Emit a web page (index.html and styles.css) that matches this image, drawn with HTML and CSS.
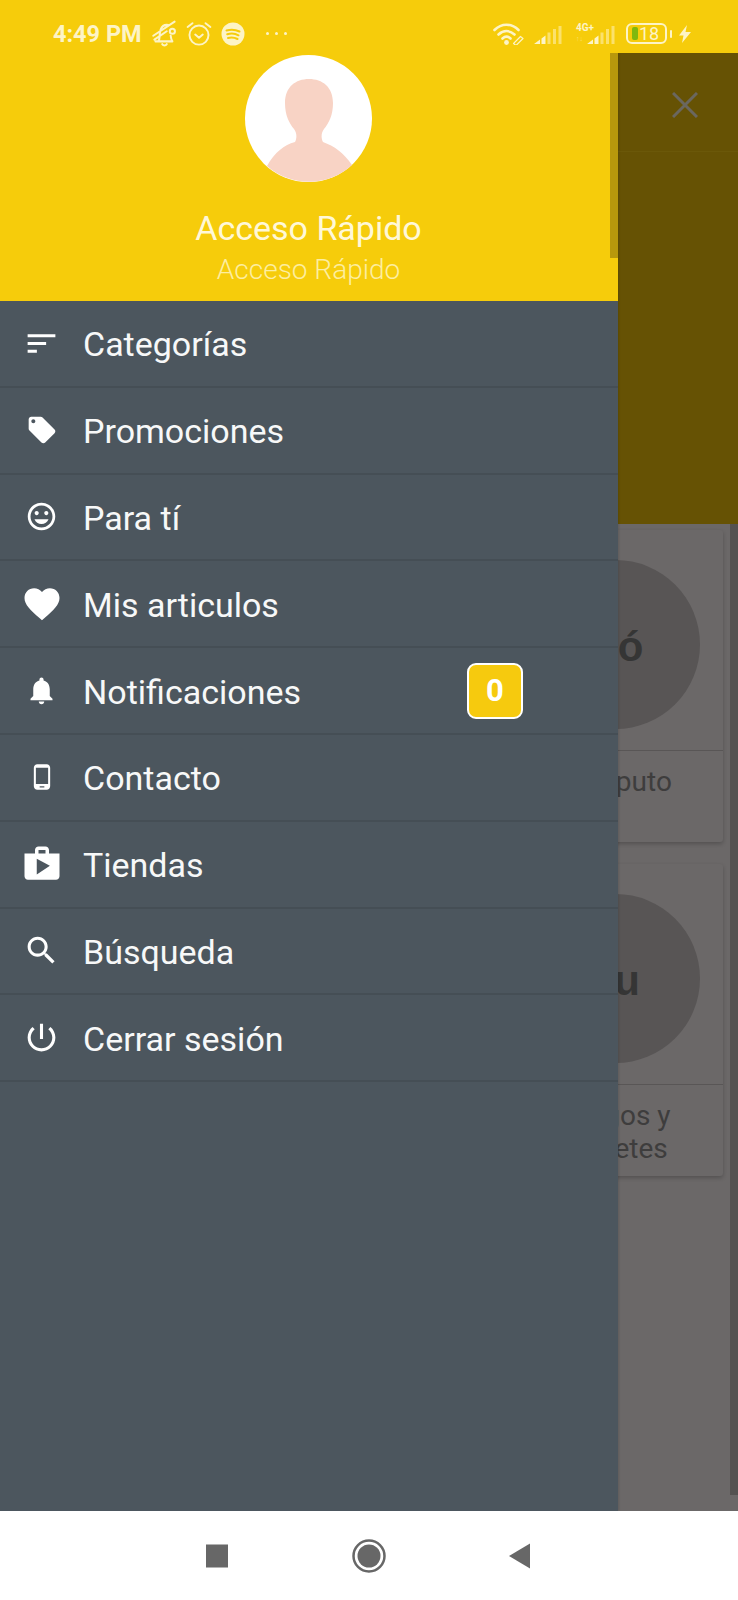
FILE: index.html
```html
<!DOCTYPE html>
<html lang="es">
<head>
<meta charset="utf-8">
<title>Acceso Rápido</title>
<link rel="stylesheet" href="styles.css">
</head>
<body>
<div class="screen">
  <div class="status">
    <span class="time">4:49 PM</span>
    <svg class="st st-bell" viewBox="0 0 24 24"><path d="M4 19h15M6.500 19c1.500-2 1-5 1.500-8M8.500 8.500C10 5 13 4 15.500 4.500M17.500 14c.2 2 .6 3.500 1.500 5M10 21.500c1 1.500 3 1.500 4 0M2 14L21 1.500M3 17.500L14 10"/><circle cx="19" cy="10" r="2.300"/></svg>
    <svg class="st st-alarm" viewBox="0 0 24 24"><circle cx="12" cy="13" r="8.800"/><path d="M8.500 12.500l3.500 3 3.500-3M1.500 5.500L6 2M22.500 5.500L18 2"/></svg>
    <svg class="st st-spotify" viewBox="0 0 24 24"><circle class="solid" cx="12" cy="12" r="11.500"/><path class="cut" d="M5.500 8.500c4-1.200 9-1 13 1M6.200 12.300c3.500-1 8-.8 11.300 1M7 16c3-.8 6.500-.6 9.500 1"/></svg>
    <span class="dots"><i></i><i></i><i></i></span>
    <span class="status-right">
      <svg class="st st-wifi" viewBox="0 0 31 23"><path d="M1.500 8C8.500 1 18.500 1 25.500 8M5.500 12.500c5-4.500 11-4.500 16 0M9.500 16.500c2.500-2.300 5.500-2.300 8 0"/><circle class="solid" cx="13.500" cy="20.500" r="2.400"/><path class="thin" d="M20.500 21.500l7-7 2.500 2-7 7z"/></svg>
      <svg class="st st-signal" viewBox="0 0 28 18"><path class="solid" d="M0 18l6-4.500V18zM7.500 12.500l4-3V18h-4z"/><rect class="faint" x="13.500" y="6.500" width="3" height="11.500"/><rect class="faint" x="19" y="3" width="3" height="15"/><rect class="faint" x="24.500" y="0" width="3" height="18"/></svg>
      <span class="net"><span class="net-label">4G+</span><span class="net-arrows">↑↓</span></span>
      <svg class="st st-signal st-signal2" viewBox="0 0 28 18"><path class="solid" d="M0 18l6-4.500V18zM7.500 12.500l4-3V18h-4z"/><rect class="faint" x="13.500" y="6.500" width="3" height="11.500"/><rect class="faint" x="19" y="3" width="3" height="15"/><rect class="faint" x="24.500" y="0" width="3" height="18"/></svg>
      <span class="battery"><i class="battery-fill"></i><span class="battery-num">18</span></span>
      <i class="battery-nub"></i>
      <svg class="st st-bolt" viewBox="0 0 12 18"><path class="solid" d="M8 0L0 10.500h4.500L3 18l9-11H6.500z"/></svg>
    </span>
  </div>

  <div class="main">
    <div class="behind">
      <div class="band">
        <div class="band-head">
          <svg class="close" viewBox="0 0 26 26"><path d="M1 1l24 24M25 1L1 25"/></svg>
        </div>
      </div>
      <div class="content">
        <div class="cards">
          <article class="card">
            <div class="card-top"><div class="disc">Có</div></div>
            <div class="card-text">Cómputo</div>
          </article>
          <article class="card">
            <div class="card-top"><div class="disc">Ju</div></div>
            <div class="card-text">Juegos y<br>juguetes</div>
          </article>
        </div>
        <div class="page-scroll"></div>
      </div>
    </div>

    <aside class="drawer">
      <header class="drawer-head">
        <svg class="avatar" viewBox="0 0 127 127">
          <circle class="avatar-bg" cx="63.500" cy="63.500" r="63.500"/>
          <path class="avatar-fg" d="M64 24c-13.500 0-24 8-24 24 0 12 4 20 9 26 3 4 3 9 1 13C39 90 30 97 22 111A63.500 63.500 0 0 0 107 110C99 98 89 91 78 87c-2-4-2-9 1-13 5-6 9-14 9-26 0-16-10.500-24-24-24z"/>
        </svg>
        <div class="head-title">Acceso Rápido</div>
        <div class="head-sub">Acceso Rápido</div>
        <div class="drawer-scroll"></div>
      </header>
      <nav class="menu">
        <a class="row"><span class="ic"><svg class="i37" viewBox="0 0 24 24"><path d="M3 18h6v-2H3v2zM3 6v2h18V6H3zm0 7h12v-2H3v2z"/></svg></span><span class="label">Categorías</span></a>
        <a class="row"><span class="ic"><svg class="i32" viewBox="0 0 24 24"><path d="M21.410 11.580l-9-9C12.050 2.220 11.550 2 11 2H4c-1.100 0-2 .9-2 2v7c0 .55.22 1.050.59 1.420l9 9c.36.36.86.58 1.410.58.55 0 1.050-.22 1.410-.59l7-7c.37-.36.59-.86.59-1.410 0-.55-.23-1.060-.59-1.420zM5.500 7C4.670 7 4 6.330 4 5.500S4.670 4 5.500 4 7 4.670 7 5.500 6.330 7 5.500 7z"/></svg></span><span class="label">Promociones</span></a>
        <a class="row"><span class="ic"><svg class="i33" viewBox="0 0 24 24"><path d="M11.990 2C6.470 2 2 6.480 2 12s4.470 10 9.990 10C17.520 22 22 17.520 22 12S17.520 2 11.990 2zM12 20c-4.420 0-8-3.580-8-8s3.580-8 8-8 8 3.580 8 8-3.580 8-8 8zm3.500-9c.83 0 1.500-.67 1.500-1.500S16.330 8 15.500 8 14 8.670 14 9.500s.67 1.500 1.500 1.500zm-7 0c.83 0 1.500-.67 1.500-1.500S9.330 8 8.500 8 7 8.670 7 9.500 7.670 11 8.500 11zm3.500 6.500c2.330 0 4.310-1.460 5.110-3.500H6.890c.8 2.040 2.780 3.500 5.110 3.500z"/></svg></span><span class="label">Para tí</span></a>
        <a class="row"><span class="ic"><svg class="i42" viewBox="0 0 24 24"><path d="M12 21.350l-1.450-1.320C5.400 15.360 2 12.280 2 8.500 2 5.420 4.420 3 7.500 3c1.740 0 3.410.81 4.500 2.090C13.090 3.810 14.760 3 16.500 3 19.580 3 22 5.420 22 8.500c0 3.780-3.400 6.860-8.550 11.540L12 21.350z"/></svg></span><span class="label">Mis articulos</span></a>
        <a class="row"><span class="ic"><svg class="i33" viewBox="0 0 24 24"><path d="M12 22c1.100 0 2-.9 2-2h-4c0 1.100.89 2 2 2zm6-6v-5c0-3.070-1.640-5.640-4.500-6.320V4c0-.83-.67-1.500-1.500-1.500s-1.500.67-1.500 1.500v.68C7.630 5.360 6 7.920 6 11v5l-2 2v1h16v-1l-2-2z"/></svg></span><span class="label">Notificaciones</span><span class="badge">0</span></a>
        <a class="row"><span class="ic"><svg class="i28" viewBox="0 0 24 24"><path d="M16 1H8C6.340 1 5 2.340 5 4v16c0 1.660 1.340 3 3 3h8c1.660 0 3-1.340 3-3V4c0-1.660-1.340-3-3-3zm-2 20h-4v-1h4v1zm3.250-3H6.750V4h10.500v14z"/></svg></span><span class="label">Contacto</span></a>
        <a class="row"><span class="ic"><svg class="i42" viewBox="0 0 24 24"><path d="M16 6V4c0-1.110-.89-2-2-2h-4c-1.110 0-2 .89-2 2v2H2v13c0 1.110.89 2 2 2h16c1.110 0 2-.89 2-2V6h-6zm-6-2h4v2h-4V4zM9 18V9l7.500 4L9 18z"/></svg></span><span class="label">Tiendas</span></a>
        <a class="row"><span class="ic"><svg class="i37" viewBox="0 0 24 24"><path d="M15.500 14h-.79l-.28-.27C15.410 12.590 16 11.110 16 9.500 16 5.910 13.090 3 9.500 3S3 5.910 3 9.500 5.910 16 9.500 16c1.610 0 3.090-.59 4.230-1.570l.27.28v.79l5 4.990L20.490 19l-4.990-5zm-6 0C7.010 14 5 11.990 5 9.500S7.010 5 9.500 5 14 7.010 14 9.500 11.990 14 9.500 14z"/></svg></span><span class="label">Búsqueda</span></a>
        <a class="row"><span class="ic"><svg class="i37" viewBox="0 0 24 24"><path d="M13 3h-2v10h2V3zm4.830 2.170l-1.420 1.420C17.990 7.860 19 9.810 19 12c0 3.870-3.130 7-7 7s-7-3.130-7-7c0-2.190 1.010-4.140 2.580-5.420L6.170 5.170C4.230 6.820 3 9.260 3 12c0 4.970 4.030 9 9 9s9-4.030 9-9c0-2.740-1.230-5.180-3.170-6.830z"/></svg></span><span class="label">Cerrar sesión</span></a>
      </nav>
    </aside>
  </div>

  <div class="navbar">
    <svg class="nav-ic" viewBox="0 0 40 40"><rect x="9" y="8.500" width="22" height="23"/></svg>
    <svg class="nav-ic" viewBox="0 0 40 40"><circle class="ring" cx="20" cy="20" r="15.500"/><circle cx="20" cy="20" r="11.500"/></svg>
    <svg class="nav-ic" viewBox="0 0 40 40"><path d="M8 20l21-12.500v25z"/></svg>
  </div>
</div>
</body>
</html>
```

FILE: styles.css
```css
* { box-sizing: border-box; }
html, body { margin: 0; padding: 0; }
body { width: 738px; height: 1600px; overflow: hidden; font-family: Roboto, "Liberation Sans", sans-serif; }

.screen { width: 738px; height: 1600px; display: flex; flex-direction: column; background: #fff; }

/* status bar */
.status { height: 53px; flex: none; background: #f6cc0b; display: flex; align-items: center; padding: 14px 47px 0 53px; color: #fdf4c6; }
.time { font-size: 23.500px; font-weight: 700; line-height: 28px; width: 89px; margin-top: 1px; white-space: nowrap; }
.st { display: block; flex: none; fill: none; stroke: #fdf4c6; stroke-width: 1.800; stroke-linecap: round; stroke-linejoin: round; }
.st .solid { fill: #fdf4c6; stroke: none; }
.st .cut { stroke: #f6cc0b; stroke-width: 2; }
.st .faint { fill: #fbe16c; stroke: none; }
.st .thin { stroke-width: 1.200; }
.st-bell { width: 27px; height: 27px; margin-left: 9px; }
.st-alarm { width: 26px; height: 26px; margin-left: 8px; }
.st-spotify { width: 24px; height: 24px; margin-left: 9px; }
.dots { display: flex; gap: 6px; margin-left: 21px; }
.dots i { width: 3px; height: 3px; border-radius: 50%; background: #fdf4c6; }
.status-right { margin-left: auto; display: flex; align-items: center; }
.st-wifi { width: 31px; height: 23px; stroke-width: 2.600; }
.st-signal { width: 28px; height: 18px; margin-left: 10px; margin-top: 2px; }
.st-signal2 { margin-left: 0; }
.net { display: flex; flex-direction: column; width: 11px; margin-left: 14px; line-height: 9px; }
.net-label { font-size: 10px; font-weight: 700; white-space: nowrap; }
.net-arrows { font-size: 7px; color: #fbe16c; margin-top: 3px; white-space: nowrap; }
.battery { width: 41px; height: 21px; margin-left: 11px; border: 2px solid #fdf4c6; border-radius: 6px; display: flex; align-items: center; padding-left: 4px; }
.battery-fill { width: 6px; height: 13px; background: #7fb80e; border-radius: 2px; flex: none; }
.battery-num { font-size: 18px; line-height: 17px; margin-left: 1px; }
.battery-nub { width: 2px; height: 8px; background: #fdf4c6; margin-left: 3px; border-radius: 1px; }
.st-bolt { width: 12px; height: 18px; margin-left: 7px; }

/* page behind the drawer */
.main { position: relative; flex: 1; display: flex; overflow: hidden; }
.behind { flex: 1; display: flex; flex-direction: column; }
.band { height: 471px; flex: none; background: #665204; }
.band-head { height: 99px; border-bottom: 1px solid #6b5809; display: flex; align-items: center; justify-content: flex-end; padding-right: 40px; }
.close { width: 26px; height: 26px; fill: none; stroke: #6a675f; stroke-width: 3; margin-top: 5px; }
.content { flex: 1; background: #6b6868; display: flex; justify-content: flex-end; }
.cards { display: flex; flex-direction: column; gap: 22px; padding: 6px 7px 0 0; }
.card { width: 214px; height: 312px; background: #6b6868; border-radius: 3px; box-shadow: 0 2px 4px rgba(0,0,0,.22); display: flex; flex-direction: column; }
.card-top { height: 221px; flex: none; padding: 30px 23px 0 22px; border-bottom: 1px solid #595656; }
.disc { width: 169px; height: 169px; border-radius: 50%; background: #585555; display: flex; align-items: center; justify-content: center; padding-top: 5px; font-family: "Liberation Sans", sans-serif; font-weight: 700; font-size: 42px; color: #353535; }
.card-text { padding: 14px 3px 0 0; text-align: center; font-size: 28px; line-height: 33px; color: #3e3d3d; }
.page-scroll { width: 8px; height: 971px; background: #545251; }

/* drawer */
.drawer { position: absolute; left: 0; top: 0; bottom: 0; width: 618px; background: #4c565e; box-shadow: 1px 0 2px rgba(0,0,0,.12); display: flex; flex-direction: column; }
.drawer-head { position: relative; height: 248px; flex: none; background: #f6cc0b; display: flex; flex-direction: column; align-items: center; padding-top: 2px; padding-right: 1px; }
.avatar { width: 127px; height: 127px; display: block; }
.avatar-bg { fill: #fff; }
.avatar-fg { fill: #f8d3c5; }
.head-title { margin-top: 26px; font-size: 34px; line-height: 40px; color: #fff8d8; white-space: nowrap; }
.head-sub { margin-top: 4px; font-size: 28px; font-weight: 300; line-height: 36px; color: #fdeea0; white-space: nowrap; }
.drawer-scroll { position: absolute; right: 0; top: 0; width: 8px; height: 205px; background: #b8980c; }

.menu { display: flex; flex-direction: column; }
.row { height: 86.800px; border-bottom: 2px solid #454e55; display: flex; align-items: center; color: #fff; }
.ic { width: 83px; flex: none; display: flex; justify-content: center; }
.ic svg { fill: #fff; display: block; }
.i28 { width: 28px; height: 28px; }
.i32 { width: 32px; height: 32px; }
.i33 { width: 33px; height: 33px; }
.i37 { width: 37px; height: 37px; }
.i42 { width: 42px; height: 42px; }
.label { font-size: 34px; line-height: 40px; padding-top: 2px; color: #f7f8f8; white-space: nowrap; }
.badge { margin-left: auto; margin-right: 95px; width: 56px; height: 56px; border: 2px solid #fff; border-radius: 9px; background: #f6ca0e; display: flex; align-items: center; justify-content: center; font-size: 31px; font-weight: 700; color: #fff; }

/* navigation bar */
.navbar { height: 89px; flex: none; background: #fff; display: flex; align-items: center; padding-left: 197px; gap: 112px; }
.nav-ic { width: 40px; height: 40px; display: block; fill: #676767; }
.nav-ic .ring { fill: none; stroke: #676767; stroke-width: 2.500; }
```
